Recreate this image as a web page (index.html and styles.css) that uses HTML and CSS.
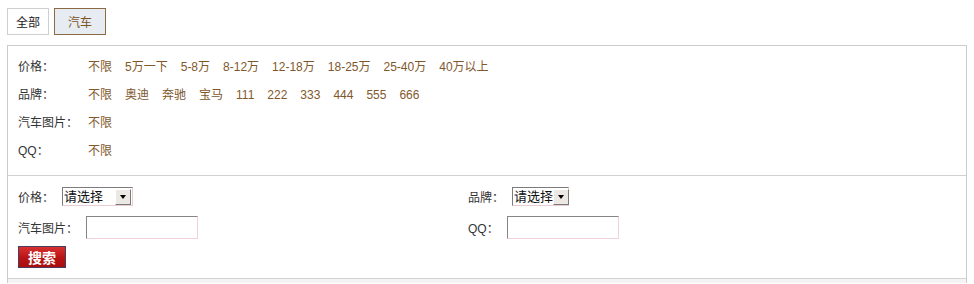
FILE: index.html
```html
<!DOCTYPE html>
<html lang="zh-CN">
<head>
<meta charset="utf-8">
<title>汽车</title>
<link rel="stylesheet" href="styles.css">
</head>
<body>
<div class="tabs">
  <a class="tab">全部</a>
  <a class="tab tab-active">汽车</a>
</div>
<div class="panel">
  <div class="filters">
    <div class="frow">
      <span class="flabel">价格：</span>
      <div class="fvals">
        <a>不限</a><a>5万一下</a><a>5-8万</a><a>8-12万</a><a>12-18万</a><a>18-25万</a><a>25-40万</a><a>40万以上</a>
      </div>
    </div>
    <div class="frow">
      <span class="flabel">品牌：</span>
      <div class="fvals">
        <a>不限</a><a>奥迪</a><a>奔驰</a><a>宝马</a><a>111</a><a>222</a><a>333</a><a>444</a><a>555</a><a>666</a>
      </div>
    </div>
    <div class="frow">
      <span class="flabel">汽车图片：</span>
      <div class="fvals"><a>不限</a></div>
    </div>
    <div class="frow">
      <span class="flabel">QQ：</span>
      <div class="fvals"><a>不限</a></div>
    </div>
  </div>
  <div class="search">
    <div class="sgrid">
      <div class="field">
        <span class="slabel">价格：</span>
        <span class="sel sel-wide"><span class="sel-text">请选择</span><span class="sel-btn"><i></i></span></span>
      </div>
      <div class="field">
        <span class="slabel">品牌：</span>
        <span class="sel sel-narrow"><span class="sel-text">请选择</span><span class="sel-btn"><i></i></span></span>
      </div>
      <div class="field">
        <span class="slabel">汽车图片：</span>
        <input class="txt" type="text">
      </div>
      <div class="field">
        <span class="slabel">QQ：</span>
        <input class="txt" type="text">
      </div>
    </div>
    <button class="btn" type="button">搜索</button>
  </div>
  <div class="foot"></div>
</div>
</body>
</html>
```

FILE: styles.css
```css
html { overflow: hidden; }
body {
  margin: 0;
  padding: 8px 7px 0;
  font-family: "Liberation Sans", "Noto Sans CJK SC", sans-serif;
  font-size: 12px;
  color: #333;
  background: #fff;
}
.tabs {
  display: flex;
  gap: 5px;
  height: 27px;
  margin-bottom: 10px;
}
.tab {
  display: flex;
  align-items: center;
  box-sizing: border-box;
  height: 27px;
  padding: 0 8px;
  border: 1px solid #cfcfcf;
  background: #fff;
  color: #222;
}
.tab-active {
  padding: 0 13px;
  border-color: #8c6a44;
  background: #e6ecf2;
  color: #7e521f;
}
.panel {
  width: 960px;
  box-sizing: border-box;
  border: 1px solid #cccccc;
  border-bottom: none;
}
.filters {
  padding: 7px 10px 10px;
  border-bottom: 1px solid #d2d2d2;
}
.frow {
  display: flex;
  align-items: center;
  height: 28px;
  line-height: 18px;
}
.flabel {
  width: 70px;
  flex: none;
  color: #333;
}
.fvals {
  display: flex;
  align-items: baseline;
  gap: 13px;
}
.fvals a {
  color: #80582c;
  text-decoration: none;
}
.search {
  padding: 11px 10px 10px;
  border-bottom: 1px solid #d2d2d2;
}
.sgrid {
  display: grid;
  grid-template-columns: 450px 1fr;
  row-gap: 10px;
  align-items: center;
}
.field {
  display: flex;
  align-items: center;
  gap: 8px;
}
.slabel { color: #333; }
.sel {
  display: inline-flex;
  align-items: center;
  justify-content: space-between;
  box-sizing: border-box;
  height: 19px;
  border: 1px solid #e9cdd2;
  border-top-color: #7c7c7c;
  border-left-color: #7c7c7c;
  background: #fff;
  padding: 0 0 0 1px;
}
.sel-wide { width: 71px; }
.sel-narrow { width: 57px; }
.sel-text {
  font-size: 13px;
  color: #111;
  line-height: 17px;
  white-space: nowrap;
}
.sel-btn {
  display: flex;
  align-items: center;
  justify-content: center;
  flex: none;
  box-sizing: border-box;
  width: 16px;
  height: 16px;
  margin-right: 1px;
  background: #ece9e4;
  border: 1px solid;
  border-color: #fff #7a7a7a #7a7a7a #fff;
}
.sel-btn i {
  width: 0;
  height: 0;
  border-left: 3.5px solid transparent;
  border-right: 3.5px solid transparent;
  border-top: 4px solid #000;
}
.txt {
  box-sizing: border-box;
  width: 112px;
  height: 23px;
  margin: 0;
  padding: 0 2px;
  border: 1px solid #efd3d8;
  border-top-color: #858585;
  border-left-color: #858585;
  background: #fff;
  font: inherit;
}
.btn {
  display: block;
  box-sizing: border-box;
  width: 48px;
  height: 22px;
  margin-top: 7px;
  padding: 0;
  border: 1px solid #4d3c5c;
  background: linear-gradient(#d83030, #b81414 55%, #a80e0e);
  color: #fff;
  font-family: "Noto Sans CJK SC", sans-serif;
  font-size: 14px;
  font-weight: bold;
  line-height: 20px;
}
.foot {
  height: 4px;
  background: #f4f4f4;
}
```
